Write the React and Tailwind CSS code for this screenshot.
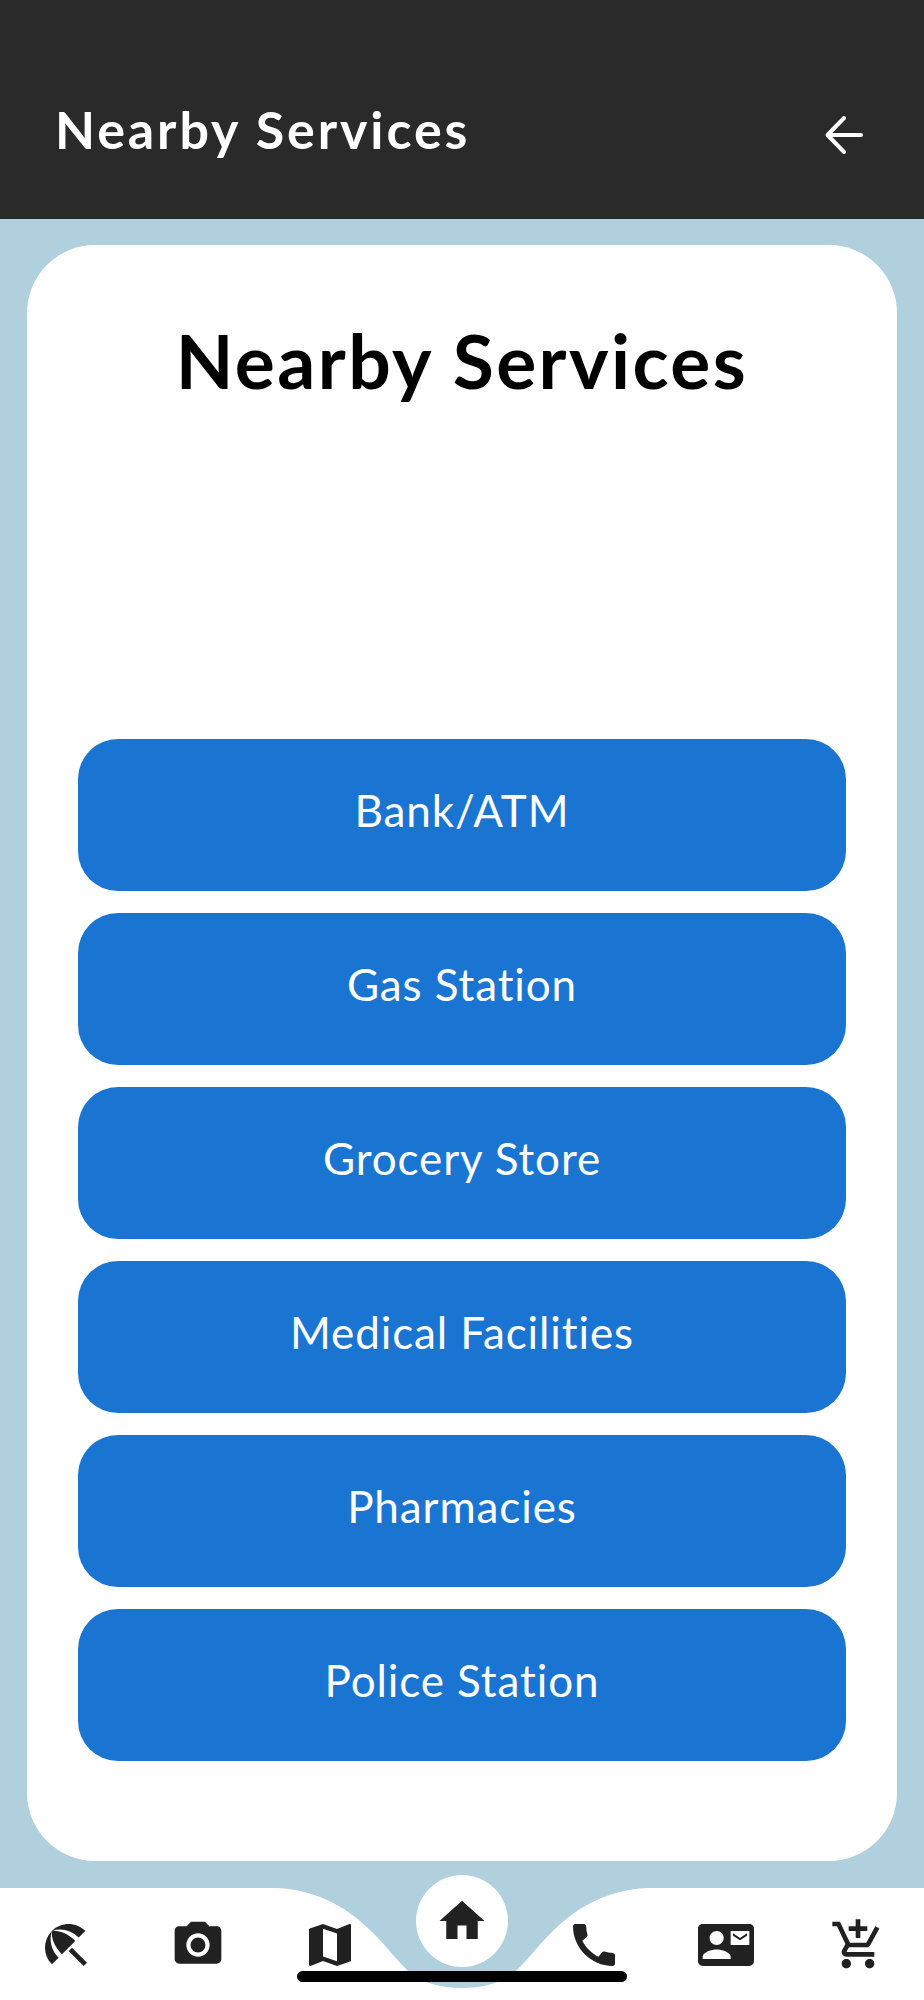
import { MdBeachAccess, MdCameraAlt, MdMap, MdHome, MdCall, MdContactMail, MdAddShoppingCart } from 'react-icons/md';

const services = ['Bank/ATM', 'Gas Station', 'Grocery Store', 'Medical Facilities', 'Pharmacies', 'Police Station'];

export default function App() {
  return (
    <div className="flex flex-col h-[2000px] w-[924px] overflow-hidden bg-[#b0d0de] font-['Lato',sans-serif]">
      <header className="h-[219px] shrink-0 bg-[#2a2a2a] flex items-center justify-between pt-[46px] pl-[55px] pr-[60px]">
        <h2 className="mb-[8px] text-[52px] leading-none font-bold text-white tracking-[2.9px]">Nearby Services</h2>
        <svg width="40" height="40" viewBox="0 0 40 40" fill="none" stroke="white" strokeWidth="4" strokeLinecap="round" strokeLinejoin="round" className="mt-[4px]">
          <path d="M37 20H4M20 3 3.5 20 20 37" />
        </svg>
      </header>

      <main className="flex-1 px-[27px] pt-[26px]">
        <div className="h-[1616px] bg-white rounded-[68px] px-[51px]">
          <h1 className="h-[494px] pt-[65px] text-center text-[75px] leading-[100px] font-bold text-black tracking-[2.4px]">Nearby Services</h1>
          <div className="flex flex-col gap-[22px]">
            {services.map(service => (
              <button key={service} className="h-[152px] rounded-[40px] bg-[#1a75d2] text-white text-[44px] leading-none pb-[10px] tracking-[0.9px]">
                {service}
              </button>
            ))}
          </div>
        </div>
      </main>

      <nav className="relative h-[112px] shrink-0 bg-white grid grid-cols-7 items-center text-[#212121] pt-[2px]">
        <svg className="absolute left-0 top-0" width="924" height="112" viewBox="0 0 924 112">
          <path d="M277 0C318 2 350 20 377 49C390 63 398 73 407 82C418 93 438 100 462 100C486 100 506 93 517 82C526 73 534 63 547 49C574 20 606 2 647 0Z" fill="#b0d0de" />
        </svg>
        <MdBeachAccess size={56} className="relative justify-self-center" />
        <MdCameraAlt size={56} className="relative justify-self-center" />
        <MdMap size={56} className="relative justify-self-center" />
        <span />
        <MdCall size={56} className="relative justify-self-center" />
        <MdContactMail size={56} className="relative justify-self-center" />
        <MdAddShoppingCart size={56} className="relative justify-self-center" />
        <div className="absolute left-[416px] top-[-13px] w-[92px] h-[92px] rounded-full bg-white flex items-center justify-center">
          <MdHome size={54} />
        </div>
        <div className="absolute left-[297px] top-[83px] w-[330px] h-[11px] rounded-full bg-black" />
      </nav>
    </div>
  );
}
